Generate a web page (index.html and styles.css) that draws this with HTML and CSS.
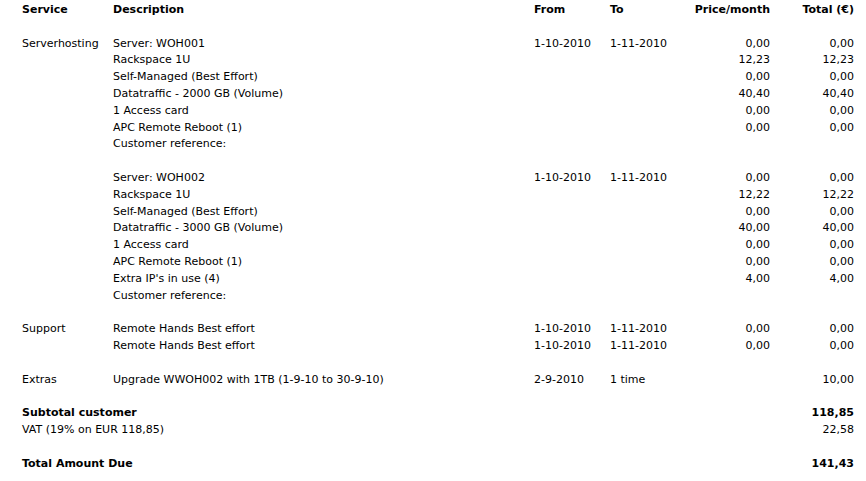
FILE: index.html
```html
<!DOCTYPE html>
<html>
<head>
<meta charset="utf-8">
<link rel="stylesheet" href="styles.css">
</head>
<body>
<div class="invoice">
  <div class="row head"><div>Service</div><div>Description</div><div>From</div><div>To</div><div class="num">Price/month</div><div class="num">Total (€)</div></div>
  <div class="row gap"></div>

  <div class="row"><div>Serverhosting</div><div>Server: WOH001</div><div>1-10-2010</div><div>1-11-2010</div><div class="num">0,00</div><div class="num">0,00</div></div>
  <div class="row"><div></div><div>Rackspace 1U</div><div></div><div></div><div class="num">12,23</div><div class="num">12,23</div></div>
  <div class="row"><div></div><div>Self-Managed (Best Effort)</div><div></div><div></div><div class="num">0,00</div><div class="num">0,00</div></div>
  <div class="row"><div></div><div>Datatraffic - 2000 GB (Volume)</div><div></div><div></div><div class="num">40,40</div><div class="num">40,40</div></div>
  <div class="row"><div></div><div>1 Access card</div><div></div><div></div><div class="num">0,00</div><div class="num">0,00</div></div>
  <div class="row"><div></div><div>APC Remote Reboot (1)</div><div></div><div></div><div class="num">0,00</div><div class="num">0,00</div></div>
  <div class="row"><div></div><div>Customer reference:</div><div></div><div></div><div></div><div></div></div>
  <div class="row gap"></div>

  <div class="row"><div></div><div>Server: WOH002</div><div>1-10-2010</div><div>1-11-2010</div><div class="num">0,00</div><div class="num">0,00</div></div>
  <div class="row"><div></div><div>Rackspace 1U</div><div></div><div></div><div class="num">12,22</div><div class="num">12,22</div></div>
  <div class="row"><div></div><div>Self-Managed (Best Effort)</div><div></div><div></div><div class="num">0,00</div><div class="num">0,00</div></div>
  <div class="row"><div></div><div>Datatraffic - 3000 GB (Volume)</div><div></div><div></div><div class="num">40,00</div><div class="num">40,00</div></div>
  <div class="row"><div></div><div>1 Access card</div><div></div><div></div><div class="num">0,00</div><div class="num">0,00</div></div>
  <div class="row"><div></div><div>APC Remote Reboot (1)</div><div></div><div></div><div class="num">0,00</div><div class="num">0,00</div></div>
  <div class="row"><div></div><div>Extra IP's in use (4)</div><div></div><div></div><div class="num">4,00</div><div class="num">4,00</div></div>
  <div class="row"><div></div><div>Customer reference:</div><div></div><div></div><div></div><div></div></div>
  <div class="row gap"></div>

  <div class="row"><div>Support</div><div>Remote Hands Best effort</div><div>1-10-2010</div><div>1-11-2010</div><div class="num">0,00</div><div class="num">0,00</div></div>
  <div class="row"><div></div><div>Remote Hands Best effort</div><div>1-10-2010</div><div>1-11-2010</div><div class="num">0,00</div><div class="num">0,00</div></div>
  <div class="row gap"></div>

  <div class="row"><div>Extras</div><div>Upgrade WWOH002 with 1TB (1-9-10 to 30-9-10)</div><div>2-9-2010</div><div>1 time</div><div class="num"></div><div class="num">10,00</div></div>
  <div class="row gap"></div>

  <div class="sum bold"><div>Subtotal customer</div><div class="num">118,85</div></div>
  <div class="sum"><div>VAT (19% on EUR 118,85)</div><div class="num">22,58</div></div>
  <div class="row gap"></div>
  <div class="sum bold"><div>Total Amount Due</div><div class="num">141,43</div></div>
</div>
</body>
</html>
```
FILE: styles.css
```css
html, body {
  margin: 0;
  padding: 0;
  background: #ffffff;
}

body {
  font-family: "DejaVu Sans", Verdana, sans-serif;
  font-size: 11px;
  color: #000000;
}

.invoice {
  padding: 2px 0 0 22px;
  width: 832px;
}

.row {
  display: grid;
  grid-template-columns: 91px 421px 76px 80px 80px 84px;
  height: 16.8px;
  line-height: 16.8px;
  white-space: nowrap;
}

.row.head {
  font-weight: bold;
}

.sum {
  display: grid;
  grid-template-columns: 748px 84px;
  height: 16.8px;
  line-height: 16.8px;
  white-space: nowrap;
}

.bold {
  font-weight: bold;
}

.num {
  text-align: right;
}
```
